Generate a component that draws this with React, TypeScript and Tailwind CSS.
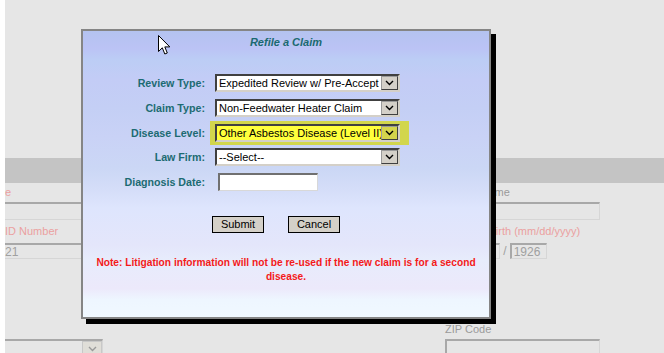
import React from "react";

function Chevron({ color = "#000" }: { color?: string }) {
  return (
    <svg width="9" height="6" viewBox="0 0 9 6">
      <path d="M1 1 L4.5 4.5 L8 1" fill="none" stroke={color} strokeWidth="1.4" />
    </svg>
  );
}

function Sel({ text, yellow }: { text: string; yellow?: boolean }) {
  return (
    <div
      className={
        "flex h-[18px] w-[185px] border-2 border-t-[#404040] border-l-[#404040] border-b-[#d4d0c8] border-r-[#d4d0c8] " +
        (yellow ? "bg-[#ffff3c]" : "bg-white")
      }
    >
      <div className="flex-1 overflow-hidden whitespace-nowrap pl-[2px] text-[11px] leading-[14px] text-black">
        {text}
      </div>
      <div
        className={
          "flex h-[14px] w-[17px] shrink-0 items-center justify-center border border-t-[#9a9a9a] border-l-[#9a9a9a] border-b-[#404040] border-r-[#404040] " +
          (yellow ? "bg-[#d4d44c]" : "bg-[#d4d0c8]")
        }
      >
        <Chevron />
      </div>
    </div>
  );
}

function Label({ children }: { children: React.ReactNode }) {
  return (
    <div className="w-[122px] text-right text-[10.667px] font-bold leading-[14px] text-[#1c6b72]">
      {children}
    </div>
  );
}

export default function App() {
  return (
    <div className="relative h-[353px] w-[664px] overflow-hidden bg-white font-['Liberation_Sans',Arial,sans-serif]">
      {/* background page */}
      <div className="ml-[5px] h-full bg-[#e6e6e6]">
        <div className="h-[158px]" />
        <div className="h-[25px] bg-[#c4c4c4]" />
        <div className="flex text-[11px]">
          {/* left column (mostly offscreen) */}
          <div className="w-[98px]">
            <div className="flex h-[19px] items-center text-[#eba0a0]">e</div>
            <div className="h-[18px] border-t-2 border-b border-r border-t-[#a8a8a8] border-b-[#d6d6d6] border-r-[#d6d6d6]" />
            <div className="flex h-[23px] items-center text-[#eba0a0]">ID Number</div>
            <div className="flex h-[16px] items-center border-t-2 border-b border-t-[#a8a8a8] border-b-[#d6d6d6] text-[12px] text-[#a0a0a0]">
              21
            </div>
            <div className="h-[80px]" />
            <div className="flex h-[18px] border-t-2 border-r border-t-[#a8a8a8] border-r-[#d6d6d6]">
              <div className="flex-1" />
              <div className="flex h-[16px] w-[20px] items-center justify-center border border-[#c8c8c8] bg-[#e0ded8]">
                <Chevron color="#9a9a9a" />
              </div>
            </div>
          </div>
          {/* right column */}
          <div className="ml-[342px] w-[155px]">
            <div className="flex h-[19px] items-center text-[#9a9a9a]">Middle Name</div>
            <div className="h-[18px] border-2 border-b border-r border-t-[#a8a8a8] border-l-[#a8a8a8] border-b-[#d6d6d6] border-r-[#d6d6d6]" />
            <div className="flex h-[23px] items-center pl-[5px] text-[#eba0a0]">Date of Birth (mm/dd/yyyy)</div>
            <div className="flex h-[16px] items-center text-[12px] text-[#a0a0a0]">
              <div className="h-[16px] w-[23px] border-2 border-b border-r border-t-[#a8a8a8] border-l-[#a8a8a8] border-b-[#d6d6d6] border-r-[#d6d6d6]" />
              <span className="mx-[3px]">/</span>
              <div className="h-[16px] w-[23px] border-2 border-b border-r border-t-[#a8a8a8] border-l-[#a8a8a8] border-b-[#d6d6d6] border-r-[#d6d6d6]" />
              <span className="mx-[3px]">/</span>
              <div className="flex h-[16px] w-[37px] items-center border-2 border-b border-r border-t-[#a8a8a8] border-l-[#a8a8a8] border-b-[#d6d6d6] border-r-[#d6d6d6] pl-[2px] leading-none">
                1926
              </div>
            </div>
            <div className="h-[60px]" />
            <div className="flex h-[20px] items-center text-[#9a9a9a]">ZIP Code</div>
            <div className="h-[18px] border-2 border-b border-r border-t-[#a8a8a8] border-l-[#a8a8a8] border-b-[#d6d6d6] border-r-[#d6d6d6]" />
          </div>
        </div>
      </div>

      {/* dialog */}
      <div className="absolute left-[81px] top-[29px] h-[290px] w-[410px] border-2 border-[#858585] bg-[linear-gradient(180deg,#b4c3f0_0%,#bbc3f5_6%,#bccdf5_10%,#c3ccf6_17%,#c4cff5_27%,#c9d2f6_37%,#cbd7f5_48%,#d4ddf8_55%,#dee5fd_62%,#e4e6fb_75%,#e7ecfc_80%,#ece9fb_90%,#eef6ff_94%,#f0f8ff_100%)] shadow-[5px_5px_0_#000]">
        <div className="flex h-[22px] items-center justify-center text-[11px] font-bold italic text-[#1a6a70]">
          Refile a Claim
        </div>
        <div className="mt-[21px] flex flex-col">
          <div className="flex h-[18px] items-center gap-[10px]">
            <Label>Review Type:</Label>
            <Sel text="Expedited Review w/ Pre-Accept" />
          </div>
          <div className="mt-[7px] flex h-[18px] items-center gap-[10px]">
            <Label>Claim Type:</Label>
            <Sel text="Non-Feedwater Heater Claim" />
          </div>
          <div className="mt-[7px] flex h-[18px] items-center gap-[10px]">
            <Label>Disease Level:</Label>
            <div className="relative">
              <div className="absolute -bottom-[3px] -left-[5px] -right-[9px] -top-[3px] bg-[#d2d64c]" />
              <div className="relative">
                <Sel text="Other Asbestos Disease (Level II)" yellow />
              </div>
            </div>
          </div>
          <div className="mt-[6px] flex h-[18px] items-center gap-[10px]">
            <Label>Law Firm:</Label>
            <Sel text="--Select--" />
          </div>
          <div className="mt-[7px] flex h-[18px] items-center gap-[10px]">
            <Label>Diagnosis Date:</Label>
            <div className="ml-[3px] h-[18px] w-[100px] border-2 border-b border-r border-t-[#707070] border-l-[#707070] border-b-[#d8d8d8] border-r-[#d8d8d8] bg-white" />
          </div>
        </div>
        <div className="mt-[25px] flex gap-[24px] pl-[129px]">
          <button className="flex h-[17px] w-[52px] items-center justify-center border border-black bg-[#d4d0c8] text-[11px] leading-none text-black">
            Submit
          </button>
          <button className="flex h-[17px] w-[52px] items-center justify-center border border-black bg-[#d4d0c8] text-[11px] leading-none text-black">
            Cancel
          </button>
        </div>
        <div className="mt-[23px] px-[8px] text-center text-[10.2px] font-bold leading-[14px] text-[#f41a1a]">
          Note: Litigation information will not be re-used if the new claim is for a second disease.
        </div>
      </div>

      {/* mouse cursor */}
      <svg className="absolute left-[158px] top-[35px]" width="13" height="21" viewBox="0 0 13 21">
        <path
          d="M0.5 0.5 L0.5 16.5 L4.3 12.8 L6.8 19 L9.3 18 L6.8 11.9 L11.8 11.9 Z"
          fill="#fff"
          stroke="#000"
          strokeWidth="1"
          strokeLinejoin="miter"
        />
      </svg>
    </div>
  );
}
